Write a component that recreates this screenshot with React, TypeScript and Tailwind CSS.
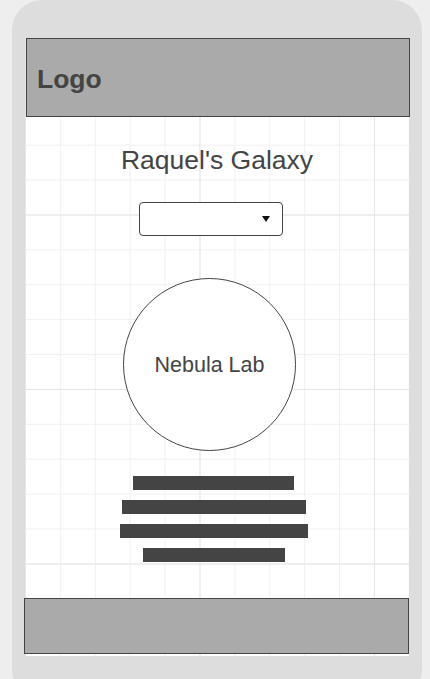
import React from "react";

const bars = [
  { ml: "ml-[108px]", w: "w-[161px]" },
  { ml: "ml-[97px]", w: "w-[184px]" },
  { ml: "ml-[95px]", w: "w-[188px]" },
  { ml: "ml-[118px]", w: "w-[142px]" },
];

export default function App() {
  return (
    <div className="h-[679px] w-[430px] overflow-hidden bg-[#eeeeee] font-['Liberation_Sans',Arial,sans-serif] text-[#444444]">
      <div className="ml-[12px] flex h-[700px] w-[410px] flex-col rounded-[30px] bg-[#dddddd] pt-[38px]">
        {/* screen */}
        <div className="ml-[13px] flex h-[618px] w-[384px] flex-col bg-white [background-image:linear-gradient(to_right,#e6e6e6_1px,transparent_1px),linear-gradient(to_bottom,#e6e6e6_1px,transparent_1px),linear-gradient(to_right,#f0f0f0_1px,transparent_1px),linear-gradient(to_bottom,#f0f0f0_1px,transparent_1px)] [background-size:174.5px_174.5px,174.5px_174.5px,34.9px_34.9px,34.9px_34.9px] [background-position:0_2px]">
          <header className="ml-[1px] h-[79px] w-[384px] border border-[#444444] bg-[#aaaaaa] pl-[10px] pt-[25px]">
            <span className="text-[26.5px] font-bold leading-[30px]">Logo</span>
          </header>

          <h1 className="mt-[28px] text-center text-[26.5px] leading-[30px]">
            Raquel&apos;s Galaxy
          </h1>

          <div className="ml-[114px] mt-[27px] flex h-[34px] w-[144px] items-center justify-end rounded-[4px] border border-[#444444] bg-white pr-[12px]">
            <svg width="8" height="6" viewBox="0 0 8 6">
              <polygon points="0,0 8,0 4,6" fill="#111111" />
            </svg>
          </div>

          <div className="ml-[98px] mt-[42px] flex h-[173px] w-[173px] items-center justify-center rounded-full border border-[#444444] bg-white">
            <span className="text-[21.5px] leading-[24px]">Nebula Lab</span>
          </div>

          <div className="mt-[25px] flex flex-col gap-[10px]">
            {bars.map((b, i) => (
              <div key={i} className={`h-[14px] bg-[#444444] ${b.ml} ${b.w}`} />
            ))}
          </div>

          <footer className="mb-[2px] ml-[-1px] mt-auto h-[56px] w-[385px] border border-[#444444] bg-[#aaaaaa]" />
        </div>
      </div>
    </div>
  );
}
